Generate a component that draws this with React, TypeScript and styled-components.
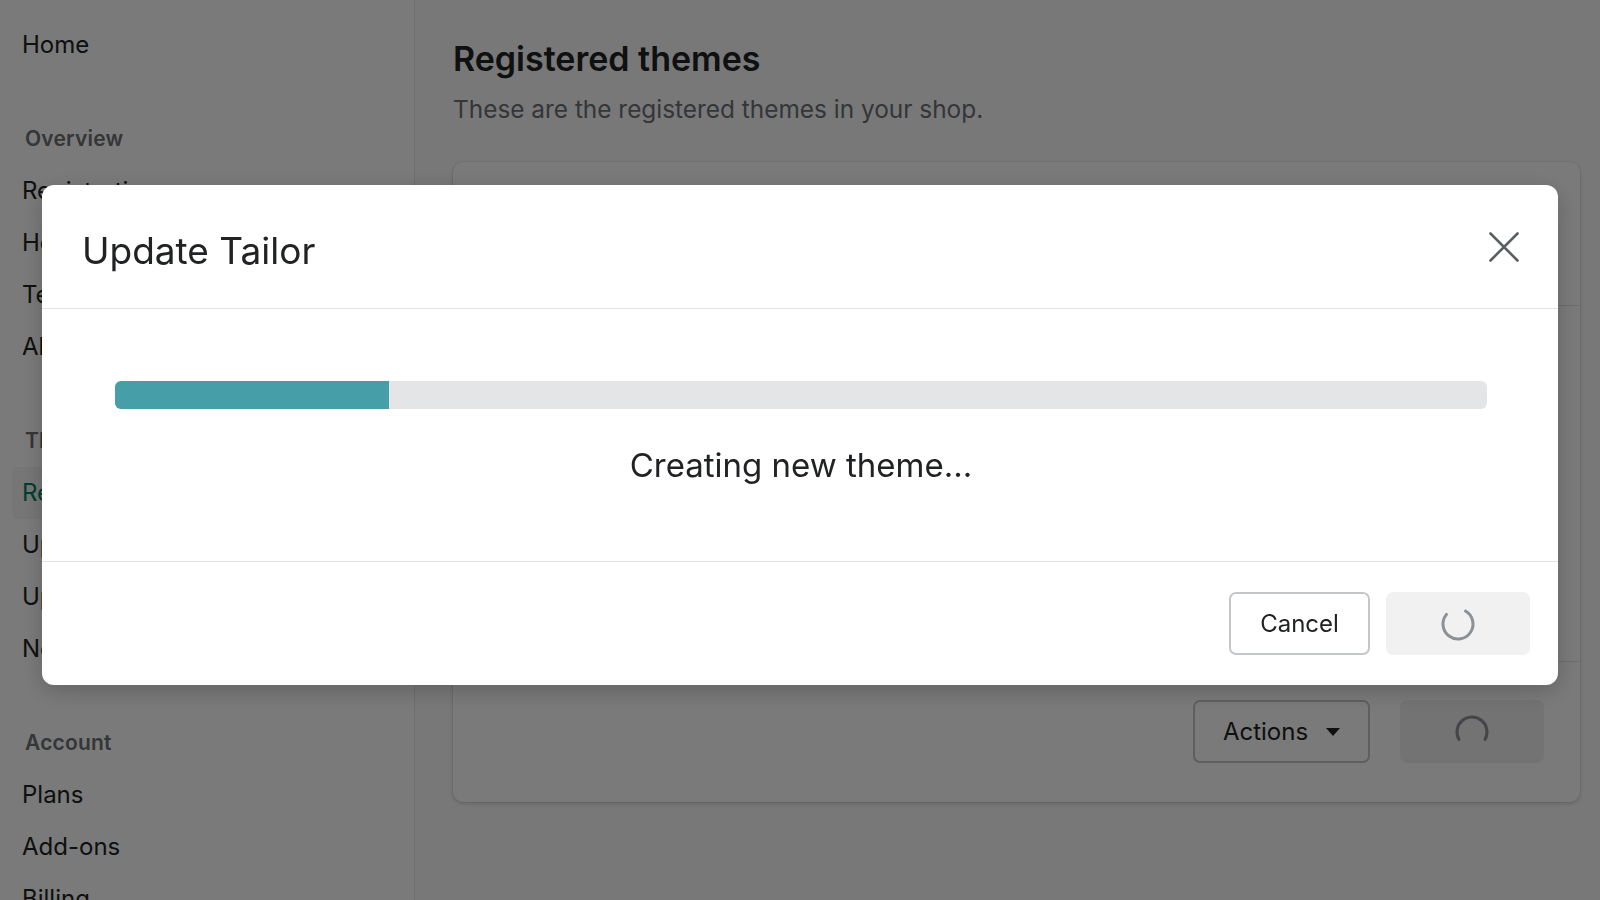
import React from "react";
import styled, { createGlobalStyle } from "styled-components";

const GlobalStyle = createGlobalStyle`
  html, body {
    margin: 0;
    padding: 0;
  }
  body {
    width: 1600px;
    height: 900px;
    overflow: hidden;
    font-family: Inter, "Noto Sans", "Liberation Sans", sans-serif;
    color: #202223;
    background: #ffffff;
  }
  * {
    box-sizing: border-box;
  }
`;

interface NavSection {
  title?: string;
  items: { label: string; active?: boolean }[];
}

const sections: NavSection[] = [
  { items: [{ label: "Home" }] },
  {
    title: "Overview",
    items: [
      { label: "Registration" },
      { label: "Help" },
      { label: "Templates" },
      { label: "Alerts" },
    ],
  },
  {
    title: "Themes",
    items: [
      { label: "Registered themes", active: true },
      { label: "Upload theme" },
      { label: "Update theme" },
      { label: "New theme" },
    ],
  },
  {
    title: "Account",
    items: [{ label: "Plans" }, { label: "Add-ons" }, { label: "Billing" }],
  },
];

// spinner arc, angles clockwise from 12 o'clock
const arcPath = (r: number, from: number, to: number) => {
  const pt = (a: number) => {
    const rad = ((a - 90) * Math.PI) / 180;
    return `${(18 + r * Math.cos(rad)).toFixed(2)} ${(18 + r * Math.sin(rad)).toFixed(2)}`;
  };
  const sweep = (to - from + 360) % 360;
  return `M ${pt(from)} A ${r} ${r} 0 ${sweep > 180 ? 1 : 0} 1 ${pt(to)}`;
};

const Spinner = ({ from, to }: { from: number; to: number }) => (
  <svg width="36" height="36" viewBox="0 0 36 36">
    <path
      d={arcPath(15, from, to)}
      fill="none"
      stroke="#8c9196"
      strokeWidth="3"
      strokeLinecap="round"
    />
  </svg>
);

const App = () => {
  const progress = 20;

  return (
    <>
      <GlobalStyle />
      <Layout>
        <Sidebar>
          {sections.map((section, i) => (
            <Section key={i}>
              {section.title && <SectionTitle>{section.title}</SectionTitle>}
              {section.items.map((item) => (
                <NavItem key={item.label} $active={item.active}>
                  {item.label}
                </NavItem>
              ))}
            </Section>
          ))}
        </Sidebar>

        <Main>
          <PageTitle>Registered themes</PageTitle>
          <PageDesc>These are the registered themes in your shop.</PageDesc>
          <Card>
            <CardRow $height={144}>
              <ThemeName>Dawn</ThemeName>
            </CardRow>
            <CardRow $height={356}>
              <ThemeName>Tailor</ThemeName>
            </CardRow>
            <CardFooter>
              <OutlineButton>
                Actions
                <Caret viewBox="0 0 14 8">
                  <path d="M0 0 H14 L7 8 Z" fill="#202223" />
                </Caret>
              </OutlineButton>
              <LoadingButton $width={144}>
                <Spinner from={240} to={120} />
              </LoadingButton>
            </CardFooter>
          </Card>
        </Main>
      </Layout>

      <Backdrop>
        <Modal>
          <ModalHeader>
            <ModalTitle>Update Tailor</ModalTitle>
            <CloseButton aria-label="Close">
              <svg width="30" height="30" viewBox="0 0 30 30">
                <path
                  d="M1.5 1.5 L28.5 28.5 M28.5 1.5 L1.5 28.5"
                  stroke="#5c5f62"
                  strokeWidth="2.6"
                  strokeLinecap="round"
                />
              </svg>
            </CloseButton>
          </ModalHeader>
          <ModalBody>
            <ProgressTrack>
              <ProgressFill style={{ width: `${progress}%` }} />
            </ProgressTrack>
            <StatusText>Creating new theme...</StatusText>
          </ModalBody>
          <ModalFooter>
            <OutlineButton $width={141}>Cancel</OutlineButton>
            <LoadingButton $width={144}>
              <Spinner from={30} to={310} />
            </LoadingButton>
          </ModalFooter>
        </Modal>
      </Backdrop>
    </>
  );
};

const Layout = styled.div`
  display: flex;
  width: 1600px;
  height: 900px;
`;

const Sidebar = styled.nav`
  width: 415px;
  flex-shrink: 0;
  border-right: 1px solid #e4e5e7;
  background: #ffffff;
  padding-top: 19px;
`;

const Section = styled.div`
  & + & {
    margin-top: 42px;
  }
`;

const SectionTitle = styled.div`
  height: 52px;
  line-height: 52px;
  padding-left: 25px;
  font-size: 21px;
  font-weight: 600;
  letter-spacing: 0.2px;
  color: #6d7175;
`;

const NavItem = styled.div<{ $active?: boolean }>`
  height: 52px;
  line-height: 52px;
  margin: 0 10px 0 12px;
  padding-left: 10px;
  border-radius: 6px;
  font-size: 24px;
  white-space: nowrap;
  color: ${(p) => (p.$active ? "#007f5f" : "#202223")};
  background: ${(p) => (p.$active ? "#f6f6f7" : "transparent")};
`;

const Main = styled.main`
  flex: 1;
  display: flex;
  flex-direction: column;
  padding: 38px 20px 0 38px;
  background: #fbfbfb;
`;

const PageTitle = styled.h1`
  margin: 0;
  font-size: 34px;
  line-height: 42px;
  font-weight: 600;
  color: #202223;
`;

const PageDesc = styled.p`
  margin: 13px 0 0;
  font-size: 24.4px;
  line-height: 32px;
  color: #6d7175;
`;

const Card = styled.section`
  margin-top: 37px;
  height: 640px;
  display: flex;
  flex-direction: column;
  background: #ffffff;
  border-radius: 10px;
  box-shadow: 0 0 0 1px rgba(63, 63, 68, 0.06), 0 2px 4px rgba(63, 63, 68, 0.2);
`;

const CardRow = styled.div<{ $height: number }>`
  height: ${(p) => p.$height}px;
  display: flex;
  align-items: center;
  padding: 0 36px;
  border-bottom: 1px solid #e4e5e7;
`;

const ThemeName = styled.span`
  font-size: 24px;
  color: #202223;
`;

const CardFooter = styled.div`
  flex: 1;
  display: flex;
  justify-content: flex-end;
  align-items: flex-start;
  gap: 30px;
  padding: 38px 36px 0 0;
`;

const OutlineButton = styled.button<{ $width?: number }>`
  display: flex;
  align-items: center;
  justify-content: center;
  gap: 18px;
  width: ${(p) => (p.$width ? `${p.$width}px` : "177px")};
  height: 63px;
  padding: 0;
  border: 2px solid #c4c7ca;
  border-radius: 7px;
  background: #ffffff;
  font-family: inherit;
  font-size: 24px;
  color: #202223;
`;

const Caret = styled.svg`
  width: 14px;
  height: 8px;
`;

const LoadingButton = styled.div<{ $width: number }>`
  display: flex;
  align-items: center;
  justify-content: center;
  width: ${(p) => p.$width}px;
  height: 63px;
  border-radius: 7px;
  background: #f1f1f1;
`;

const Backdrop = styled.div`
  position: fixed;
  inset: 0;
  display: flex;
  justify-content: center;
  align-items: flex-start;
  padding-top: 185px;
  background: rgba(0, 0, 0, 0.52);
`;

const Modal = styled.div`
  width: 1516px;
  height: 500px;
  display: flex;
  flex-direction: column;
  background: #ffffff;
  border-radius: 12px;
  box-shadow: 0 6px 24px rgba(0, 0, 0, 0.2);
  overflow: hidden;
`;

const ModalHeader = styled.header`
  height: 124px;
  flex-shrink: 0;
  display: flex;
  align-items: center;
  justify-content: space-between;
  padding: 0 39px 0 40px;
  border-bottom: 1px solid #e1e3e5;
`;

const ModalTitle = styled.h2`
  margin: 0;
  padding-top: 8px;
  font-size: 37px;
  font-weight: 400;
  color: #202223;
`;

const CloseButton = styled.button`
  display: flex;
  padding: 0;
  border: none;
  background: none;
`;

const ModalBody = styled.div`
  height: 253px;
  flex-shrink: 0;
  padding: 72px 71px 0 73px;
  border-bottom: 1px solid #e1e3e5;
`;

const ProgressTrack = styled.div`
  height: 28px;
  border-radius: 6px;
  background: #e4e5e7;
  overflow: hidden;
`;

const ProgressFill = styled.div`
  height: 100%;
  background: #469ea8;
`;

const StatusText = styled.div`
  margin-top: 36px;
  text-align: center;
  font-size: 33px;
  line-height: 40px;
  color: #202223;
`;

const ModalFooter = styled.footer`
  flex: 1;
  display: flex;
  justify-content: flex-end;
  align-items: center;
  gap: 16px;
  padding-right: 28px;
`;

export default App;
